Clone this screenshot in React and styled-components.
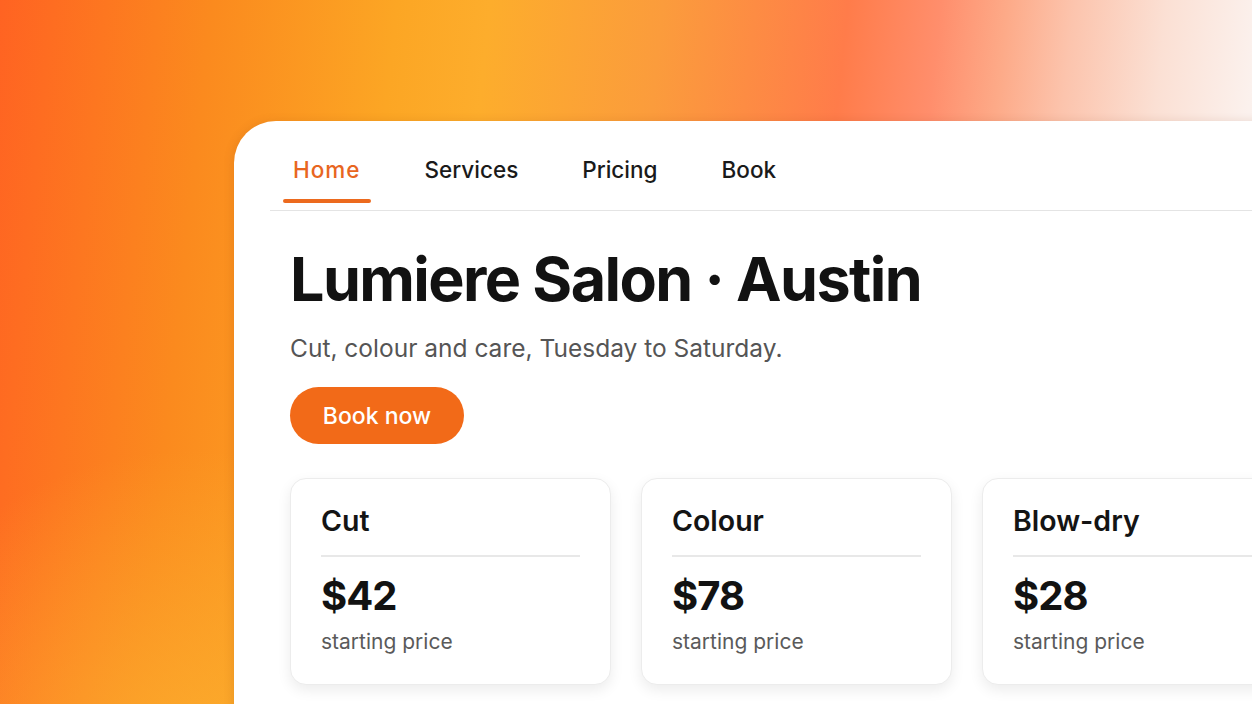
import React from 'react';
import styled, { createGlobalStyle } from 'styled-components';

const GlobalStyle = createGlobalStyle`
  html, body {
    margin: 0;
    padding: 0;
  }
  body {
    font-family: Inter, "Noto Sans", "Liberation Sans", sans-serif;
    color: #141414;
  }
`;

const Page = styled.div`
  width: 1252px;
  height: 704px;
  overflow: hidden;
  box-sizing: border-box;
  padding: 121px 0 0 234px;
  background:
    radial-gradient(ellipse 340px 330px at 190px 780px, rgba(252, 178, 48, 0.8), rgba(252, 178, 48, 0) 100%),
    linear-gradient(96deg, #ff6322 0%, #fb8a1e 16%, #fca624 30%, #fdad2c 37%, #fb9c3c 50%, #ff7c4a 64%, #ff8e6c 71%, #fdaa88 76%, #fcc4ad 81%, #fbe0d4 88%, #fbf1ed 95%, #fbf5f2 100%);
`;

const Panel = styled.div`
  width: 1120px;
  min-height: 640px;
  background: #ffffff;
  border-top-left-radius: 42px;
  box-shadow: -2px 0 10px rgba(120, 50, 0, 0.12);
`;

const Nav = styled.nav`
  display: flex;
  gap: 44px;
  margin-left: 36px;
  padding: 35px 0 0 13px;
  border-bottom: 1.5px solid #e4e4e4;
`;

const Tab = styled.a`
  position: relative;
  padding: 0 10px 26px;
  font-size: 22.5px;
  line-height: 28px;
  font-weight: ${p => (p.$active ? 500 : 450)};
  letter-spacing: ${p => (p.$active ? '1px' : '0')};
  color: ${p => (p.$active ? '#e8661f' : '#1a1a1a')};
  text-decoration: none;

  &::after {
    content: '';
    display: ${p => (p.$active ? 'block' : 'none')};
    position: absolute;
    left: 0;
    right: 0;
    bottom: 7px;
    height: 4px;
    border-radius: 2px;
    background: #ec6a1e;
  }
`;

const Hero = styled.section`
  padding: 31px 0 0 56px;
`;

const Title = styled.h1`
  margin: 0;
  font-size: 61px;
  line-height: 75px;
  font-weight: 700;
  letter-spacing: -1.6px;
  color: #121212;
`;

const Subtitle = styled.p`
  margin: 16px 0 0;
  font-size: 24.5px;
  line-height: 31px;
  color: #555555;
`;

const BookButton = styled.button`
  display: block;
  margin-top: 23px;
  width: 174px;
  height: 57px;
  border: none;
  border-radius: 29px;
  background: #f26a18;
  color: #ffffff;
  font-family: inherit;
  font-size: 23px;
  font-weight: 450;
  cursor: pointer;
`;

const Cards = styled.div`
  display: grid;
  grid-template-columns: 321px 311px 321px;
  gap: 30px;
  margin-top: 34px;
`;

const Card = styled.div`
  box-sizing: border-box;
  height: 207px;
  padding: 24px 30px 0 30px;
  background: #ffffff;
  border: 1px solid #ececec;
  border-radius: 16px;
  box-shadow: 0 5px 14px rgba(0, 0, 0, 0.08);
`;

const CardTitle = styled.h3`
  margin: 0;
  padding-bottom: 16px;
  font-size: 28.5px;
  line-height: 36px;
  font-weight: 600;
  color: #141414;
  border-bottom: 2px solid #e8e8e8;
`;

const Price = styled.div`
  margin-top: 14px;
  font-size: 40px;
  line-height: 50px;
  font-weight: 700;
  letter-spacing: -1px;
  color: #121212;
`;

const Caption = styled.div`
  margin-top: 7px;
  font-size: 21px;
  line-height: 28px;
  color: #5a5a5a;
`;

const tabs = ['Home', 'Services', 'Pricing', 'Book'];

const services = [
  { name: 'Cut', price: '$42' },
  { name: 'Colour', price: '$78' },
  { name: 'Blow-dry', price: '$28' },
];

const App = () => (
  <>
    <GlobalStyle />
    <Page>
      <Panel>
        <Nav>
          {tabs.map((t, i) => (
            <Tab key={t} href="#" $active={i === 0}>{t}</Tab>
          ))}
        </Nav>
        <Hero>
          <Title>Lumiere Salon · Austin</Title>
          <Subtitle>Cut, colour and care, Tuesday to Saturday.</Subtitle>
          <BookButton>Book now</BookButton>
          <Cards>
            {services.map(s => (
              <Card key={s.name}>
                <CardTitle>{s.name}</CardTitle>
                <Price>{s.price}</Price>
                <Caption>starting price</Caption>
              </Card>
            ))}
          </Cards>
        </Hero>
      </Panel>
    </Page>
  </>
);

export default App;
